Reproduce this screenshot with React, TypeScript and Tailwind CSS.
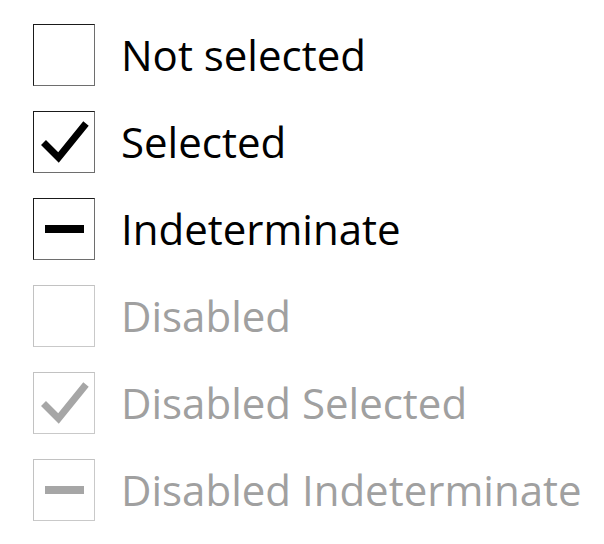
import React from "react";

type State = "off" | "on" | "mixed";

function Box({ state, disabled }: { state: State; disabled?: boolean }) {
  const mark = disabled ? "#a6a6a6" : "#000000";
  return (
    <div
      className={
        disabled
          ? "w-[62px] h-[62px] shrink-0 border border-t-[#c2c2c2] border-l-[#c2c2c2] border-r-[#c9c9c9] border-b-[#c9c9c9] bg-white flex items-center justify-center"
          : "w-[62px] h-[62px] shrink-0 border border-t-[#1a1a1a] border-l-[#1a1a1a] border-r-[#6e6e6e] border-b-[#6e6e6e] bg-white flex items-center justify-center"
      }
    >
      {state === "on" && (
        <svg width="60" height="60" viewBox="0 0 60 60" className="block">
          <polyline
            points="9.5,30.5 24.5,45.5 52,11.5"
            fill="none"
            stroke={mark}
            strokeWidth="7"
            strokeLinecap="butt"
            strokeLinejoin="miter"
          />
        </svg>
      )}
      {state === "mixed" && (
        <div
          className={
            disabled ? "w-[39px] h-[8px] bg-[#a6a6a6]" : "w-[39px] h-[8px] bg-black"
          }
        />
      )}
    </div>
  );
}

function Row({ label, state, disabled }: { label: string; state: State; disabled?: boolean }) {
  return (
    <div className="flex items-center gap-[26px]">
      <Box state={state} disabled={disabled} />
      <span
        className={
          disabled
            ? "text-[42px] leading-none text-[#a0a0a0] whitespace-nowrap"
            : "text-[42px] leading-none text-black whitespace-nowrap"
        }
        style={{ fontFamily: '"Open Sans", "Noto Sans", sans-serif' }}
      >
        {label}
      </span>
    </div>
  );
}

export default function App() {
  return (
    <div className="w-[604px] h-[544px] bg-white pl-[33px] pt-[24px] flex flex-col gap-[25px]">
      <Row label="Not selected" state="off" />
      <Row label="Selected" state="on" />
      <Row label="Indeterminate" state="mixed" />
      <Row label="Disabled" state="off" disabled />
      <Row label="Disabled Selected" state="on" disabled />
      <Row label="Disabled Indeterminate" state="mixed" disabled />
    </div>
  );
}
